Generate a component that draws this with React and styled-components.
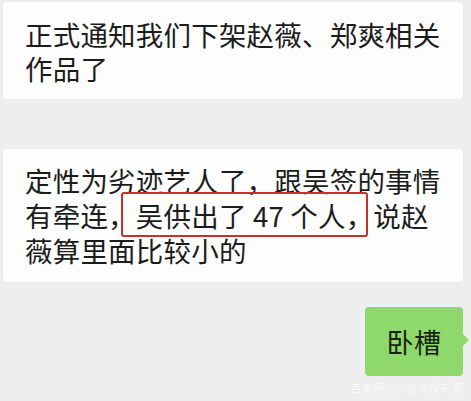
import React from "react";
import styled, { createGlobalStyle } from "styled-components";

const Global = createGlobalStyle`
  html, body { margin: 0; padding: 0; background: #eeeeee; }
  body { font-family: "Noto Sans CJK SC", "Noto Sans", sans-serif; }
`;

const Chat = styled.div`
  width: 471px;
  height: 401px;
  overflow: hidden;
  background: #eeeeee;
  display: flex;
  flex-direction: column;
  padding: 2px 8px 0 3px;
  box-sizing: border-box;
`;

const Bubble = styled.div`
  background: #fdfdfd;
  border-radius: 4px;
  box-shadow: 0 0 3px rgba(0, 0, 0, 0.04);
  padding: ${(p) => p.$pad};
  margin-top: ${(p) => p.$mt || 0}px;
  font-size: 27.5px;
  line-height: ${(p) => p.$lh}px;
  color: #1c1c1c;
  letter-spacing: 0.2px;
`;

const Marked = styled.span`
  position: relative;
  &::after {
    content: "";
    position: absolute;
    left: -15px;
    right: 5px;
    top: -3px;
    bottom: -2px;
    border: 2px solid #c8302c;
    border-radius: 3px;
  }
`;

const Row = styled.div`
  display: flex;
  justify-content: flex-end;
  margin-top: ${(p) => p.$mt}px;
`;

const Green = styled.div`
  position: relative;
  background: #8fd96c;
  border-radius: 4px;
  height: 69px;
  width: 98px;
  display: flex;
  align-items: center;
  justify-content: center;
  font-size: 27px;
  color: #15240c;
  letter-spacing: 0.5px;
  &::after {
    content: "";
    position: absolute;
    right: -6px;
    top: 27px;
    border-left: 6px solid #8fd96c;
    border-top: 6px solid transparent;
    border-bottom: 6px solid transparent;
  }
`;

const Watermark = styled.div`
  align-self: flex-end;
  margin-top: 6px;
  margin-right: 0;
  font-size: 11px;
  line-height: 12px;
  color: rgba(255, 255, 255, 0.95);
  text-shadow: 0 0 1px rgba(0, 0, 0, 0.08);
  letter-spacing: 0.4px;
`;

export default function App() {
  return (
    <>
      <Global />
      <Chat>
        <Bubble $pad="15px 18px 14px 22px" $lh={34}>
          正式通知我们下架赵薇、郑爽相关
          <br />
          作品了
        </Bubble>
        <Bubble $pad="14px 18px 14px 22px" $lh={35} $mt={50}>
          定性为劣迹艺人了，跟吴签的事情
          <br />
          有牵连，<Marked>吴供出了 47 个人，</Marked>说赵
          <br />
          薇算里面比较小的
        </Bubble>
        <Row $mt={25}>
          <Green>卧槽</Green>
        </Row>
        <Watermark>百家号 / 小创说娱乐圈</Watermark>
      </Chat>
    </>
  );
}
